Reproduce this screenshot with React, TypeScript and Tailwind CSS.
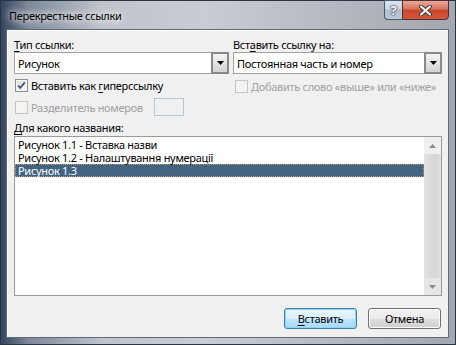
import React from "react";

const DownArrow = ({ color = "#000" }: { color?: string }) => (
  <svg width="7" height="4" viewBox="0 0 7 4">
    <path d="M0 0h7L3.5 4z" fill={color} />
  </svg>
);

const UpArrow = ({ color = "#000" }: { color?: string }) => (
  <svg width="7" height="4" viewBox="0 0 7 4">
    <path d="M0 4h7L3.5 0z" fill={color} />
  </svg>
);

function Checkbox({ checked, disabled }: { checked?: boolean; disabled?: boolean }) {
  return (
    <div
      className={
        disabled
          ? "relative h-[13px] w-[13px] shrink-0 border border-[#c5c5c5] bg-[#f4f4f4]"
          : "relative h-[13px] w-[13px] shrink-0 border border-[#8e8f8f] bg-linear-to-br from-[#d8d8d8] to-[#fcfcfc] shadow-[inset_0_0_0_1px_#f4f4f4]"
      }
    >
      {checked && (
        <svg className="absolute left-0 top-0" width="11" height="11" viewBox="0 0 11 11">
          <path d="M2.2 5.6l2.1 2.3L8.8 2.4" fill="none" stroke="#3c5585" strokeWidth="1.7" />
        </svg>
      )}
    </div>
  );
}

function Combo({ value }: { value: string }) {
  return (
    <div className="flex h-[22px] border border-[#a3a3a3] bg-white">
      <div className="flex flex-1 items-center pl-[3px]">{value}</div>
      <div className="-my-px -mr-px flex w-[18px] items-center justify-center border-2 border-[#8a8a8a] bg-linear-to-b from-[#f4f4f4] to-[#d3d3d3]">
        <DownArrow />
      </div>
    </div>
  );
}

function Btn({ children, primary }: { children: React.ReactNode; primary?: boolean }) {
  return (
    <button
      className={
        primary
          ? "flex h-[21px] w-[73px] items-center justify-center rounded-[3px] border border-[#3c7fb1] bg-[linear-gradient(#eaf6fd,#d9f0fc_50%,#bee6fd_50%,#a7d9f5)] shadow-[inset_0_0_0_1px_#98d1ef]"
          : "flex h-[21px] w-[73px] items-center justify-center rounded-[3px] border border-[#707070] bg-[linear-gradient(#f2f2f2,#ebebeb_50%,#dddddd_50%,#cfcfcf)] shadow-[inset_0_0_0_1px_#fcfcfc]"
      }
    >
      {children}
    </button>
  );
}

const items = ["Рисунок 1.1 - Вставка назви", "Рисунок 1.2 - Налаштування нумерації", "Рисунок 1.3"];

export default function App() {
  return (
    <div className="flex h-[345px] w-[456px] flex-col border border-[#2b3442] bg-[linear-gradient(to_right,#34455e_0%,#7d8898_6%,#bfc4cb_22%,#c9cdd3_45%,#b3b8c0_75%,#a3a8b0_100%)] font-['Noto_Sans',sans-serif] text-[11px] leading-[15px] tracking-[-0.3px] text-black">
      <div className="flex h-[28px] shrink-0 justify-between">
        <div className="pl-[8px] pt-[7px] [text-shadow:0_0_6px_#fff,0_0_10px_#fff]">Перекрестные ссылки</div>
        <div className="-mt-px mr-[6px] flex h-[20px]">
          <div className="flex w-[18px] items-center justify-center rounded-bl-[4px] border border-r-0 border-[#4f5866] bg-[linear-gradient(#dbe4ee,#c9d6e3_45%,#aebfd1_50%,#b9cad9)] text-[13px] font-bold text-white [text-shadow:0_0_1px_#333,0_0_1px_#333,0_0_2px_#333]">
            ?
          </div>
          <div className="flex w-[47px] items-center justify-center rounded-br-[4px] border border-[#4f3030] bg-[linear-gradient(#e9a99b,#d8735f_45%,#c8452b_50%,#d4583b)]">
            <svg width="13" height="11" viewBox="0 0 13 11">
              <path d="M2 1.5l9 8M11 1.5l-9 8" stroke="#3b3b3b" strokeWidth="4" strokeLinecap="round" />
              <path d="M2 1.5l9 8M11 1.5l-9 8" stroke="#fff" strokeWidth="2" strokeLinecap="round" />
            </svg>
          </div>
        </div>
      </div>

      <div className="mb-[6px] ml-[5px] mr-[6px] flex flex-1 flex-col border border-[#5d6a7c] bg-[#f0f0f0] pl-[7px] pr-[6px] pt-[7px] shadow-[inset_1px_1px_0_#fff]">
        <div className="grid grid-cols-[215px_209px] gap-x-[4px]">
          <div className="flex flex-col">
            <div>
              <span className="underline underline-offset-2">Т</span>ип ссылки:
            </div>
            <Combo value="Рисунок" />
            <div className="mt-[5px] flex h-[13px] items-center gap-[3px] pl-px">
              <Checkbox checked />
              <span>
                Вставить как <span className="underline underline-offset-2">г</span>иперссылку
              </span>
            </div>
            <div className="mt-[6px] flex h-[18px] items-center pl-px">
              <Checkbox disabled />
              <span className="w-[126px] pl-[3px] text-[#a0a0a0]">Разделитель номеров</span>
              <div className="h-[18px] w-[30px] border border-[#b9c6d3] bg-[#f0f0f0]" />
            </div>
          </div>
          <div className="flex flex-col">
            <div>
              Вст<span className="underline underline-offset-2">а</span>вить ссылку на:
            </div>
            <Combo value="Постоянная часть и номер" />
            <div className="mt-[6px] flex h-[13px] items-center gap-[3px] pl-[2px]">
              <Checkbox disabled />
              <span className="whitespace-nowrap text-[#a0a0a0]">Добавить слово «выше» или «ниже»</span>
            </div>
          </div>
        </div>

        <div className="mt-[4px]">
          <span className="underline underline-offset-2">Д</span>ля какого названия:
        </div>
        <div className="mt-px flex h-[160px] border border-[#9a9a9a] bg-white">
          <div className="flex-1 pt-px">
            {items.map((t, i) => (
              <div
                key={i}
                className={
                  i === 2
                    ? "h-[13px] border border-dotted border-[#c9956a] bg-[#426482] pl-[2px] leading-[11px] text-white"
                    : "h-[13px] pl-[3px] leading-[13px]"
                }
              >
                {t}
              </div>
            ))}
          </div>
          <div className="flex w-[17px] flex-col bg-[linear-gradient(to_right,#e3e3e3,#d9d9d9_40%,#d6d6d6_70%,#e2e2e2)]">
            <div className="flex h-[17px] items-center justify-center bg-[#efefef]">
              <UpArrow color="#8a8a8a" />
            </div>
            <div className="flex-1" />
            <div className="flex h-[17px] items-center justify-center bg-[#e6e6e6]">
              <DownArrow color="#8a8a8a" />
            </div>
          </div>
        </div>

        <div className="mt-[12px] flex justify-end gap-[11px] pr-px">
          <Btn primary>
            <span>
              <span className="underline underline-offset-2">В</span>ставить
            </span>
          </Btn>
          <Btn>Отмена</Btn>
        </div>
      </div>
    </div>
  );
}
